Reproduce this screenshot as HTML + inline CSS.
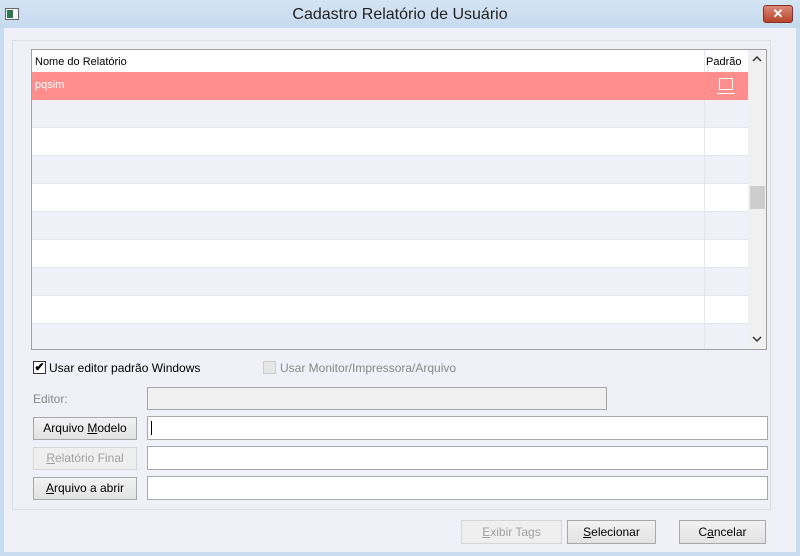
<!DOCTYPE html>
<html><head><style>
*{box-sizing:border-box;margin:0;padding:0}
body{width:800px;height:556px;overflow:hidden;background:#c8dcf0;font-family:"Liberation Sans",sans-serif;font-size:12px;position:relative;color:#000}
.abs{position:absolute}
.title{left:0;top:0;width:800px;height:28px;background:linear-gradient(#d4e4f4,#c6dbef);text-align:center;font-size:16px;line-height:30px;color:#222}
.body{left:4px;top:28px;width:792px;height:524px;background:#f0f1f8}
.group{left:12px;top:40px;width:759px;height:470px;border:1px solid #dcdee6}
.grid{left:31px;top:49px;width:736px;height:301px;border:1px solid #a0a0a0;background:#fff;overflow:hidden}
.row{position:absolute;left:0;width:716px;height:28px;border-bottom:1px solid #e4e6ee}
.btn{position:absolute;border:1px solid #a8a8a8;background:linear-gradient(#f2f2f2,#e2e2e2);text-align:center;line-height:21px;font-size:12px}
.dis{color:#a0a0a0;border-color:#d6d6d6;background:#efefef}
.inp{position:absolute;background:#fff;border:1px solid #a8a8a8}
u{text-decoration:underline}
</style></head><body>
<div class="abs title">Cadastro Relatório de Usuário</div>
<div class="abs" style="left:5px;top:8px;width:14px;height:12px;border:1px solid #666;background:#fff"><div style="position:absolute;left:1px;top:1px;width:6px;height:8px;background:#2a7a4a"></div></div>
<div class="abs" style="left:763px;top:5px;width:30px;height:18px;border:1px solid #8a3020;border-radius:3px;background:linear-gradient(#d98a78,#b8432c);color:#fff;text-align:center;font-weight:bold;line-height:16px;font-size:13px">✕</div>
<div class="abs body"></div>
<div class="abs group"></div>
<div class="abs grid">
 <div class="abs" style="left:0;top:0;width:716px;height:22px;background:#fff"></div>
 <div class="abs" style="left:3px;top:6px;font-size:11px">Nome do Relatório</div>
 <div class="abs" style="left:674px;top:6px;font-size:11px">Padrão</div>
 <div class="row" style="top:22px;background:#ff8e8c;border:none"></div>
 <div class="abs" style="left:3px;top:29px;color:#fff;font-size:11px">pqsim</div>
 <div class="abs" style="left:687px;top:28px;width:14px;height:12px;border:1px solid #fff"></div>
 <div class="abs" style="left:685px;top:43px;width:18px;height:1px;background:#fff"></div>
 <div class="row" style="top:50px;background:#f0f1f8"></div>
 <div class="row" style="top:78px"></div>
 <div class="row" style="top:106px;background:#f0f1f8"></div>
 <div class="row" style="top:134px"></div>
 <div class="row" style="top:162px;background:#f0f1f8"></div>
 <div class="row" style="top:190px"></div>
 <div class="row" style="top:218px;background:#f0f1f8"></div>
 <div class="row" style="top:246px"></div>
 <div class="row" style="top:274px;background:#f0f1f8"></div>
 <div class="abs" style="left:672px;top:0;width:1px;height:22px;background:#e4e6ee"></div>
 <div class="abs" style="left:672px;top:50px;width:1px;height:250px;background:#e4e6ee"></div>
 <div class="abs" style="left:716px;top:0;width:19px;height:300px;background:#f0f0f0"></div>
 <svg class="abs" style="left:720px;top:5px" width="10" height="8"><path d="M1 6 L5 2 L9 6" stroke="#333" stroke-width="1.5" fill="none"/></svg>
 <svg class="abs" style="left:720px;top:285px" width="10" height="8"><path d="M1 2 L5 6 L9 2" stroke="#333" stroke-width="1.5" fill="none"/></svg>
 <div class="abs" style="left:718px;top:136px;width:15px;height:23px;background:#cdcdcd"></div>
</div>
<div class="abs" style="left:33px;top:361px;width:13px;height:13px;border:1px solid #333;background:#fff;font-size:12px;line-height:11px;text-align:center;font-weight:bold">✔</div>
<div class="abs" style="left:49px;top:361px">Usar editor padrão Windows</div>
<div class="abs" style="left:263px;top:361px;width:13px;height:13px;border:1px solid #ccc;background:#e6e6e6"></div>
<div class="abs" style="left:280px;top:361px;color:#888">Usar Monitor/Impressora/Arquivo</div>
<div class="abs" style="left:33px;top:392px;color:#888">Editor:</div>
<div class="inp" style="left:147px;top:387px;width:460px;height:23px;background:#f0f0f0"></div>
<div class="btn" style="left:33px;top:417px;width:104px;height:23px">Arquivo <u>M</u>odelo</div>
<div class="inp" style="left:147px;top:416px;width:621px;height:24px"><div style="position:absolute;left:3px;top:4px;width:1px;height:14px;background:#000"></div></div>
<div class="btn dis" style="left:33px;top:447px;width:104px;height:23px"><u>R</u>elatório Final</div>
<div class="inp" style="left:147px;top:446px;width:621px;height:24px"></div>
<div class="btn" style="left:33px;top:477px;width:104px;height:23px"><u>A</u>rquivo a abrir</div>
<div class="inp" style="left:147px;top:476px;width:621px;height:24px"></div>
<div class="btn dis" style="left:461px;top:520px;width:101px;height:24px;line-height:22px"><u>E</u>xibir Tags</div>
<div class="btn" style="left:567px;top:520px;width:89px;height:24px;line-height:22px"><u>S</u>elecionar</div>
<div class="btn" style="left:679px;top:520px;width:87px;height:24px;line-height:22px">C<u>a</u>ncelar</div>
</body></html>
